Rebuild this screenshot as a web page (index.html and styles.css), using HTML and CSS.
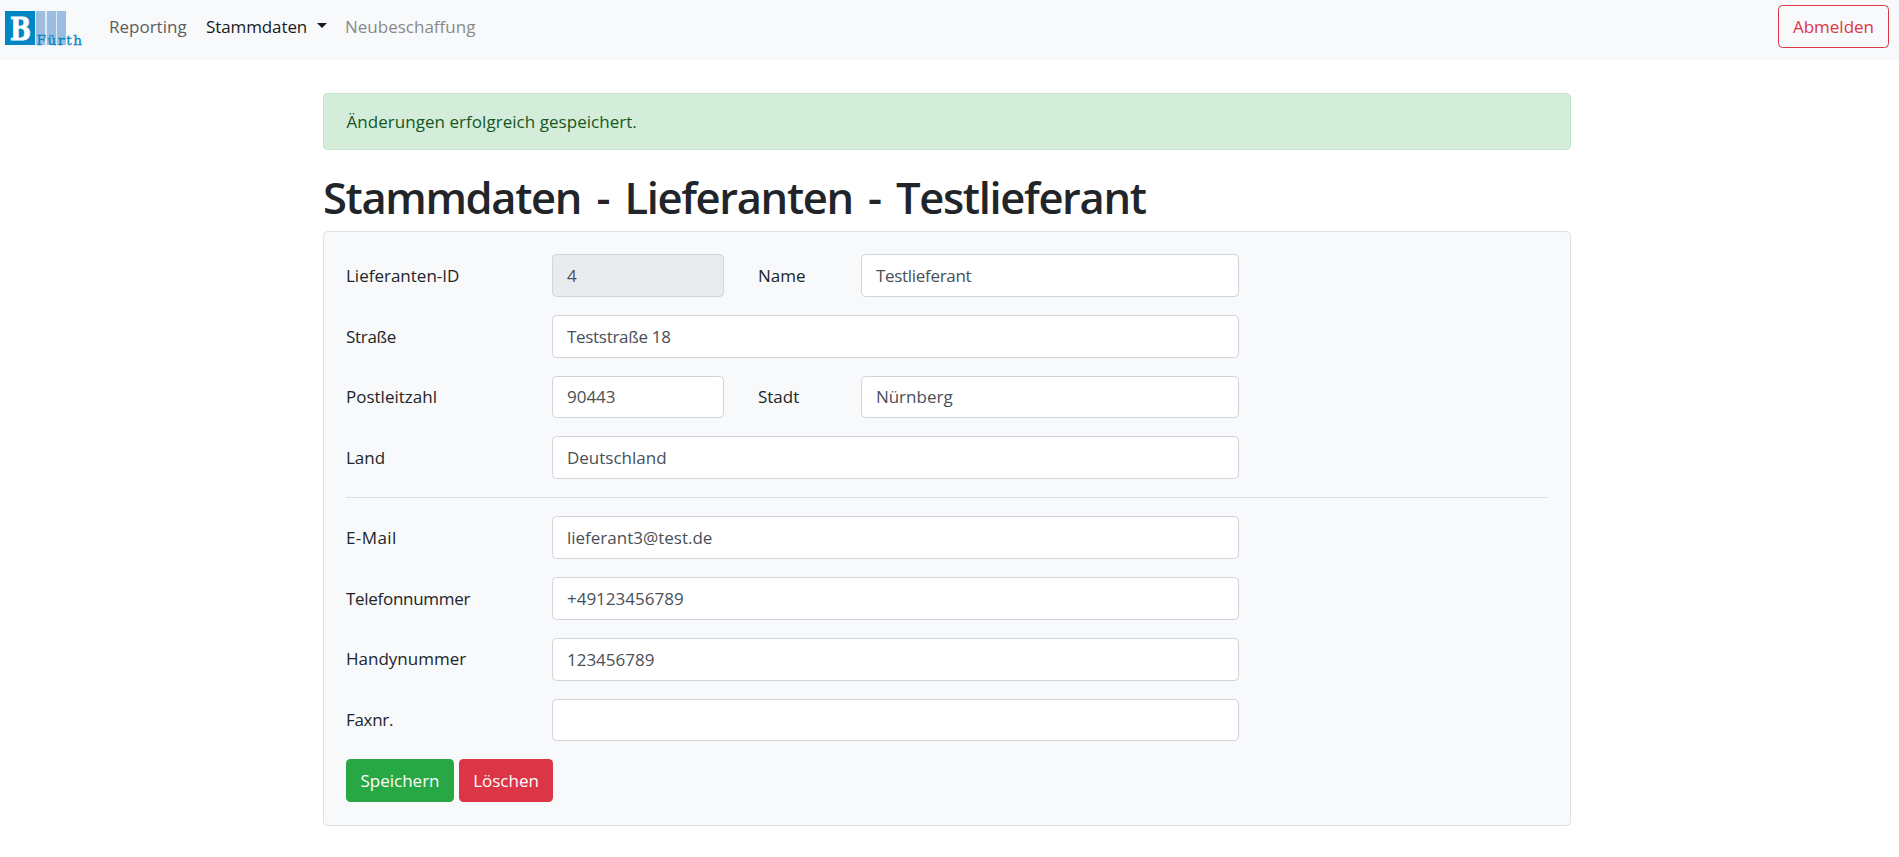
FILE: index.html
```html
<!DOCTYPE html>
<html lang="de">
<head>
<meta charset="utf-8">
<title>Stammdaten - Lieferanten</title>
<link rel="stylesheet" href="styles.css">
</head>
<body>
<nav class="navbar">
  <svg class="logo" width="80" height="38" viewBox="0 0 80 38" role="img" aria-label="Fürth">
    <rect x="0" y="0" width="30" height="34" fill="#0087c3"/>
    <rect x="30" y="0" width="31" height="34" fill="#dceaf6"/>
    <rect x="31" y="0" width="9" height="34" fill="#9cbde0"/>
    <rect x="42" y="0" width="9" height="34" fill="#9cbde0"/>
    <rect x="52" y="0" width="9" height="34" fill="#9cbde0"/>
    <text class="logo-b" x="5" y="28.5" textLength="21" lengthAdjust="spacingAndGlyphs">B</text>
    <text class="logo-name" x="31.5" y="33.5" textLength="45.5">Fürth</text>
  </svg>
  <a class="nav-link n1">Reporting</a>
  <a class="nav-link n2 active">Stammdaten<i class="caret"></i></a>
  <a class="nav-link n3 disabled">Neubeschaffung</a>
  <button class="btn btn-outline">Abmelden</button>
</nav>
<main class="container">
  <div class="alert">Änderungen erfolgreich gespeichert.</div>
  <h1 class="title">Stammdaten - Lieferanten - Testlieferant</h1>
  <form class="card">
    <div class="row"><label>Lieferanten-ID</label><input class="short" value="4" readonly><label class="mid">Name</label><input class="medium tight" value="Testlieferant"></div>
    <div class="row"><label class="tight">Straße</label><input class="wide tight" value="Teststraße 18"></div>
    <div class="row"><label>Postleitzahl</label><input class="short" value="90443"><label class="mid">Stadt</label><input class="medium" value="Nürnberg"></div>
    <div class="row"><label>Land</label><input class="wide" value="Deutschland"></div>
    <hr class="divider">
    <div class="row"><label class="loose">E-Mail</label><input class="wide" value="lieferant3@test.de"></div>
    <div class="row"><label class="tight">Telefonnummer</label><input class="wide" value="+49123456789"></div>
    <div class="row"><label>Handynummer</label><input class="wide" value="123456789"></div>
    <div class="row"><label class="tight">Faxnr.</label><input class="wide" value=""></div>
    <div class="actions"><button type="button" class="btn save">Speichern</button><button type="button" class="btn delete">Löschen</button></div>
  </form>
</main>
</body>
</html>
```
FILE: styles.css
```css
* { box-sizing: border-box; }
body {
  margin: 0;
  background: #fff;
  color: #212529;
  font-family: "Open Sans", "Noto Sans", sans-serif;
  font-size: 17px;
  line-height: 27px;
}
.navbar {
  display: flex;
  align-items: flex-start;
  height: 60px;
  padding: 5px 10px 0 5px;
  background: #f8f9fa;
}
.logo { margin: 6px 24px 0 0; overflow: visible; }
.logo-b { font: bold 31px "DejaVu Serif", serif; fill: #fff; stroke: #fff; stroke-width: 0.8px; }
.logo-name { font: 13.5px "DejaVu Serif", serif; fill: #0087c3; stroke: #0087c3; stroke-width: 0.3px; }
.nav-link { padding-top: 8px; margin-right: 18px; white-space: nowrap; }
.n1 { width: 79px; color: #5c5d5e; }
.n2 { width: 121px; color: #18191a; display: flex; letter-spacing: -0.1px; }
.n3 { color: #88898a; }
.caret {
  margin: 10px 0 0 10px;
  width: 0;
  height: 0;
  border: 5.5px solid transparent;
  border-top-color: currentColor;
  border-bottom: 0;
}
.btn {
  height: 43px;
  padding: 0;
  border: 1px solid transparent;
  border-radius: 4.5px;
  font: inherit;
  color: #fff;
}
.btn-outline { width: 111px; margin-left: auto; border-color: #dc3545; background: transparent; color: #dc3545; }
.container { width: 1248px; margin: 33px 0 0 323px; }
.alert {
  height: 57px;
  padding: 14px 22.5px;
  border: 1px solid #c3e6cb;
  border-radius: 4.5px;
  background: #d4edda;
  color: #155724;
  letter-spacing: 0.04px;
}
.title {
  margin: 18px 0 9px;
  padding-top: 3px;
  height: 54px;
  font-size: 43.5px;
  line-height: 54px;
  font-weight: 600;
  letter-spacing: -1.35px;
  word-spacing: 5.4px;
  white-space: nowrap;
}
.card {
  height: 595px;
  padding: 22.1px 22px;
  border: 1px solid #dfdfdf;
  border-radius: 4.5px;
  background: #f8f9fa;
}
.row {
  display: grid;
  grid-template-columns: repeat(12, 1fr);
  column-gap: 33.75px;
  height: 42.75px;
  margin-bottom: 18px;
}
label { grid-column: span 2; padding-top: 7.7px; white-space: nowrap; }
.mid { grid-column: span 1; }
input {
  width: 100%;
  min-width: 0;
  height: 42.75px;
  padding: 7px 14px;
  border: 1px solid #ced4da;
  border-radius: 4.5px;
  background: #fff;
  color: #495057;
  font: inherit;
}
input[readonly] { background: #e9ecef; }
.short { grid-column: span 2; }
.medium { grid-column: span 4; }
.wide { grid-column: span 7; }
.tight { letter-spacing: -0.3px; }
.loose { letter-spacing: 0.4px; }
.divider { height: 1px; margin: 0 0 18.2px; border: 0; background: #dfe0e1; }
.actions { display: flex; gap: 5px; }
.save { width: 108px; background: #28a745; }
.delete { width: 94px; background: #dc3545; }
```
